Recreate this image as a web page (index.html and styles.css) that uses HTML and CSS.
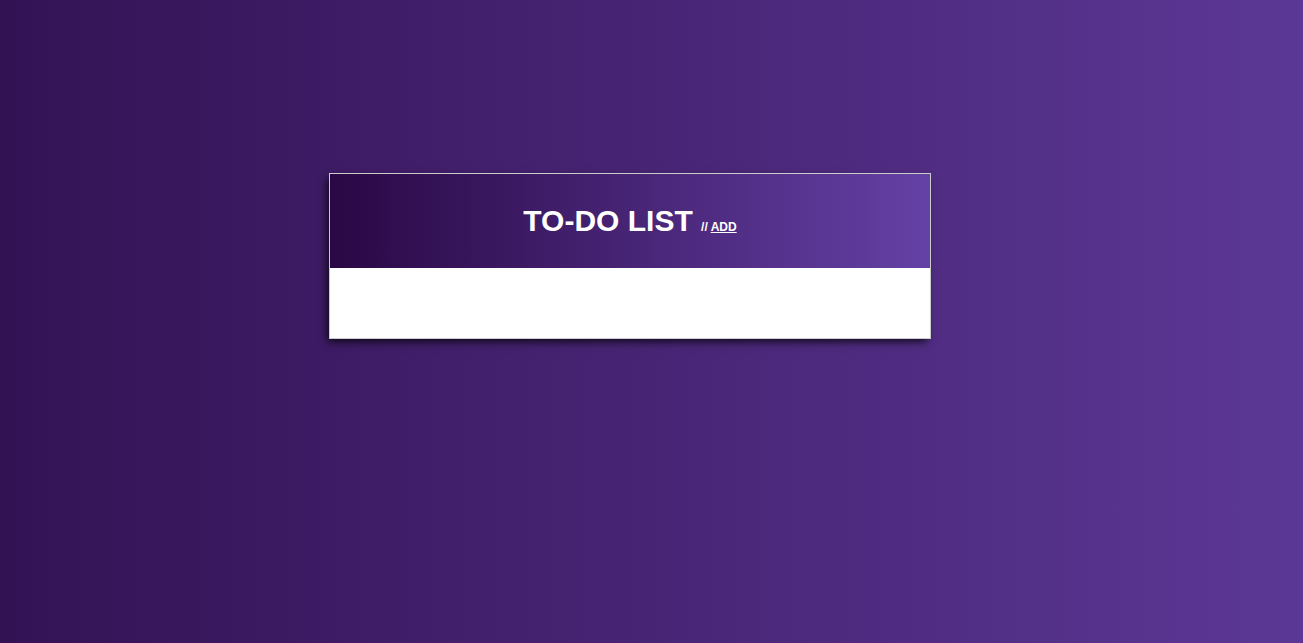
FILE: index.html
```html
<!DOCTYPE html>
<html lang="en">
<head>
<meta charset="utf-8">
<meta name="viewport" content="width=device-width, initial-scale=1">
<title>To-Do List</title>
<link rel="stylesheet" href="styles.css">
</head>
<body>
<main class="page">
  <section class="card">
    <header class="card-header">
      <h1 class="title">TO-DO LIST <span class="title-action">// <a class="add-link" href="#add">ADD</a></span></h1>
    </header>
    <ul class="todo-list"></ul>
  </section>
</main>
</body>
</html>
```

FILE: styles.css
```css
* {
  box-sizing: border-box;
}

body {
  margin: 0;
  min-height: 100vh;
  background: linear-gradient(to right, #331254, #5c3896);
  font-family: "Liberation Sans", Arial, sans-serif;
}

.page {
  display: flex;
  justify-content: center;
  padding: 173px 43px 40px 0;
}

.card {
  width: 100%;
  max-width: 602px;
  background: #fff;
  border: 1px solid #ccc;
  box-shadow: -3px 4px 8px -1px rgba(0, 0, 0, 0.75);
}

.card-header {
  padding: 29px 16px;
  background: linear-gradient(to right, #2a0845, #6441a5);
  color: #fff;
  text-align: center;
}

.title {
  margin: 0;
  font-size: 30px;
  line-height: 36px;
}

.title-action {
  font-size: 12px;
  line-height: 12px;
}

.add-link {
  color: inherit;
}

.todo-list {
  margin: 0;
  padding: 0;
  min-height: 70px;
  list-style: none;
}
```
